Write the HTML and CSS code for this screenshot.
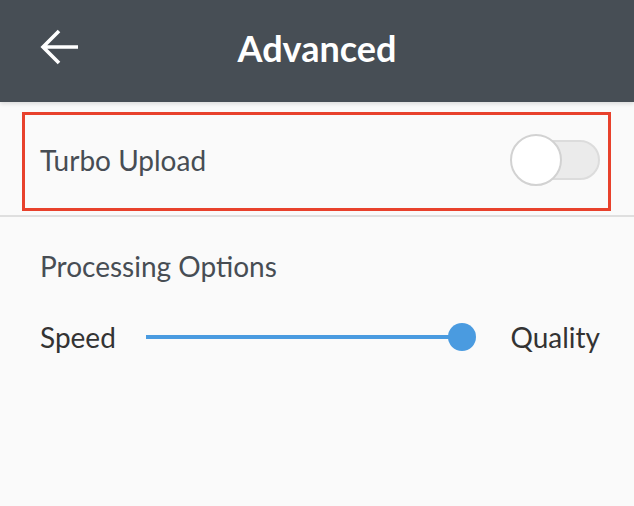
FILE: index.html
```html
<!DOCTYPE html>
<html lang="en">
<head>
  <meta charset="UTF-8" />
  <meta name="viewport" content="width=device-width, initial-scale=1.0"/>
  <title>Advanced</title>
  <link rel="stylesheet" href="styles.css">
</head>
<body>
  <div class="header">
    <a class="back" href="#">
      <svg width="40" height="38" viewBox="0 0 40 38">
        <path d="M3 19 H38 M19 3 L3 19 L19 35" fill="none" stroke="#fff" stroke-width="3.6"/>
      </svg>
    </a>
    <h1>Advanced</h1>
  </div>

  <div class="highlight">
    <div class="setting-row">
      <span>Turbo Upload</span>
      <div class="toggle">
        <div class="track"></div>
        <div class="knob"></div>
      </div>
    </div>
  </div>

  <div class="divider"></div>

  <div class="section">
    <div class="section-title">Processing Options</div>
    <div class="slider-row">
      <span>Speed</span>
      <div class="slider">
        <div class="bar"></div>
        <div class="thumb"></div>
      </div>
      <span>Quality</span>
    </div>
  </div>
</body>
</html>
```

FILE: styles.css
```css
body {
  margin: 0;
  font-family: Lato, "Liberation Sans", sans-serif;
  background: #fafafa;
  color: #474d54;
}

.header {
  height: 102px;
  background: #474e55;
  display: flex;
  align-items: center;
  position: relative;
  box-shadow: 0 2px 4px rgba(0,0,0,0.12);
}

.back {
  display: flex;
  margin-left: 40px;
  margin-top: -8px;
}

.header h1 {
  position: absolute;
  left: 0;
  right: 0;
  margin: 0;
  text-align: center;
  color: #fff;
  font-size: 36px;
  font-weight: bold;
  margin-top: -6px;
  pointer-events: none;
}

.highlight {
  margin: 10px 23px 0 22px;
  border: 3px solid #e8412c;
  height: 93px;
  display: flex;
  align-items: center;
}

.setting-row {
  flex: 1;
  display: flex;
  align-items: center;
  justify-content: space-between;
  padding: 0 8px 0 15px;
  font-size: 28px;
  margin-top: -4px;
}

.toggle {
  position: relative;
  width: 90px;
  height: 52px;
}

.track {
  position: absolute;
  left: 8px;
  right: 0;
  top: 6px;
  height: 40px;
  border-radius: 20px;
  background: #ebebeb;
  border: 2px solid #dcdcdc;
  box-sizing: border-box;
}

.knob {
  position: absolute;
  left: 0;
  top: 0;
  width: 52px;
  height: 52px;
  border-radius: 50%;
  background: #fff;
  border: 2px solid #d2d2d2;
  box-sizing: border-box;
}

.divider {
  height: 2px;
  background: #dfdfdf;
  margin-top: 4px;
}

.section {
  padding: 32px 34px 0 40px;
}

.section-title {
  font-size: 28px;
  line-height: 34px;
}

.slider-row {
  display: flex;
  align-items: center;
  margin-top: 37px;
  font-size: 28px;
  color: #333;
}

.slider {
  flex: 1;
  position: relative;
  height: 30px;
  margin: 0 34px 0 30px;
}

.bar {
  position: absolute;
  left: 0;
  right: 13px;
  top: 13px;
  height: 4px;
  background: #4a9be0;
}

.thumb {
  position: absolute;
  right: 0;
  top: 1px;
  width: 28px;
  height: 28px;
  border-radius: 50%;
  background: #4a9be0;
}
```
